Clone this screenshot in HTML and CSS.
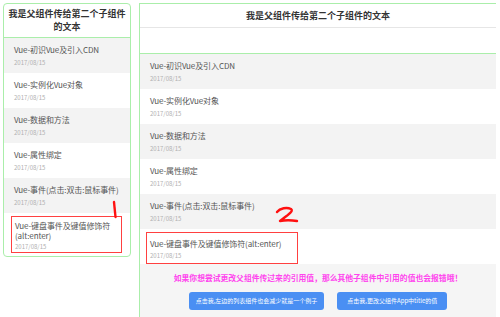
FILE: index.html
```html
<!DOCTYPE html>
<html lang="zh-CN">
<head>
    <meta charset="UTF-8">
    <title>父子组件传值</title>
    <link rel="stylesheet" href="styles.css">
</head>
<body>
    <div class="page">
        <!-- 第一个子组件 -->
        <div class="panel panel-left">
            <h3 class="panel-title">我是父组件传给第二个子组件的文本</h3>
            <ul class="list">
                <li class="item"><p class="item-title">Vue-初识Vue及引入CDN</p><p class="item-date">2017/08/15</p></li>
                <li class="item"><p class="item-title">Vue-实例化Vue对象</p><p class="item-date">2017/08/15</p></li>
                <li class="item"><p class="item-title">Vue-数据和方法</p><p class="item-date">2017/08/15</p></li>
                <li class="item"><p class="item-title">Vue-属性绑定</p><p class="item-date">2017/08/15</p></li>
                <li class="item"><p class="item-title">Vue-事件(点击:双击:鼠标事件)</p><p class="item-date">2017/08/15</p></li>
                <li class="item item-marked">
                    <div class="mark-box">
                        <p class="item-title">Vue-键盘事件及键值修饰符(alt:enter)</p>
                        <p class="item-date">2017/08/15</p>
                    </div>
                </li>
            </ul>
        </div>

        <!-- 第二个子组件 -->
        <div class="panel panel-right">
            <h3 class="panel-title">我是父组件传给第二个子组件的文本</h3>
            <div class="panel-blank"></div>
            <ul class="list">
                <li class="item"><p class="item-title">Vue-初识Vue及引入CDN</p><p class="item-date">2017/08/15</p></li>
                <li class="item"><p class="item-title">Vue-实例化Vue对象</p><p class="item-date">2017/08/15</p></li>
                <li class="item"><p class="item-title">Vue-数据和方法</p><p class="item-date">2017/08/15</p></li>
                <li class="item"><p class="item-title">Vue-属性绑定</p><p class="item-date">2017/08/15</p></li>
                <li class="item"><p class="item-title">Vue-事件(点击:双击:鼠标事件)</p><p class="item-date">2017/08/15</p></li>
                <li class="item item-marked">
                    <div class="mark-box">
                        <p class="item-title">Vue-键盘事件及键值修饰符(alt:enter)</p>
                        <p class="item-date">2017/08/15</p>
                    </div>
                </li>
            </ul>
            <div class="panel-footer">
                <p class="warning">如果你想尝试更改父组件传过来的引用值，那么其他子组件中引用的值也会报错哦！</p>
                <div class="buttons">
                    <button class="btn">点击我,左边的列表组件也会减少就是一个例子</button>
                    <button class="btn btn-alt">点击我,更改父组件App中title的值</button>
                </div>
            </div>
        </div>

        <!-- 手画的标注 -->
        <svg class="note note-1" width="10" height="20" viewBox="0 0 10 20">
            <path d="M4 2 L5.5 17" stroke="#ff1010" stroke-width="2.4" stroke-linecap="round" fill="none"/>
        </svg>
        <svg class="note note-2" width="26" height="20" viewBox="0 0 26 20">
            <path d="M3 6 C6 2 13 1 17 3 C20 5 14 9 6 15 C11 14 17 14 23 15" stroke="#ff1010" stroke-width="2.4" stroke-linecap="round" stroke-linejoin="round" fill="none"/>
        </svg>
    </div>
</body>
</html>
```

FILE: styles.css
```css
/* Общие стили */
body {
    margin: 0;
    background-color: #fff;
    font-family: "Noto Sans CJK SC", "DejaVu Sans", sans-serif;
    color: #555;
}

.page {
    position: relative;
    display: flex;
    align-items: flex-start;
    gap: 8px;
    padding: 3px 4px 0 3px;
    height: 314px;
    overflow: hidden;
}

p, ul, h3 {
    margin: 0;
    padding: 0;
}

ul {
    list-style: none;
}

/* Панели */
.panel {
    box-sizing: border-box;
    background-color: #fff;
}

.panel-left {
    width: 128px;
    flex: none;
    border: 1.5px solid #aaeeaa;
    border-radius: 4px;
    overflow: hidden;
}

.panel-right {
    flex: 1;
    border-top: 1.5px solid #aaeeaa;
    border-left: 1.5px solid #aaeeaa;
}

.panel-title {
    font-size: 9px;
    font-weight: bold;
    color: #333;
    text-align: center;
}

.panel-left .panel-title {
    line-height: 13px;
    padding: 3px 2px 3.5px;
    border-bottom: 1.5px solid #aaeeaa;
}

.panel-right .panel-title {
    line-height: 14px;
    padding: 4.5px 0 4px;
    border-bottom: 1px solid #e6e6e6;
}

.panel-blank {
    height: 25px;
    border-bottom: 1.5px solid #aaeeaa;
}

/* Список */
.item {
    padding: 7px 10px 6px;
}

.panel-left .item {
    padding: 7px 2px 6px 10px;
}

.item:nth-child(odd) {
    background-color: #f3f3f3;
}

.item-title {
    font-size: 8px;
    line-height: 10px;
    color: #555;
    letter-spacing: -0.1px;
}

.item-date {
    font-size: 6px;
    line-height: 8px;
    margin-top: 4px;
    color: #b0b0b0;
}

/* Красная рамка-пометка */
.mark-box {
    border: 1.5px solid #ff4040;
}

.panel-left .item-marked {
    padding: 3px 8px 3px 7px;
}

.panel-left .mark-box {
    padding: 4px 3px 1px;
}

.panel-left .mark-box .item-date {
    margin-top: 2px;
}

.panel-right .item-marked {
    padding: 3px 0 0 6px;
}

.panel-right .mark-box {
    display: inline-block;
    padding: 6px 16px 3px 3px;
}

.panel-right .mark-box .item-date {
    margin-top: 3px;
}

/* Низ правой панели */
.panel-footer {
    background-color: #f5f5f5;
    padding: 8px 0 10px;
    text-align: center;
}

.warning {
    font-size: 7.8px;
    line-height: 12px;
    font-weight: bold;
    color: #ff44ee;
}

.buttons {
    display: flex;
    justify-content: center;
    gap: 13px;
    margin-top: 8px;
}

.btn {
    height: 18px;
    padding: 0 7px;
    border: none;
    border-radius: 3px;
    background-color: #4a8ff3;
    color: #fff;
    font-family: inherit;
    font-size: 6px;
}

.btn-alt {
    padding: 0 10px;
}

/* Пометки */
.note {
    position: absolute;
}

.note-1 {
    left: 110px;
    top: 200px;
}

.note-2 {
    left: 274px;
    top: 206px;
}
```
